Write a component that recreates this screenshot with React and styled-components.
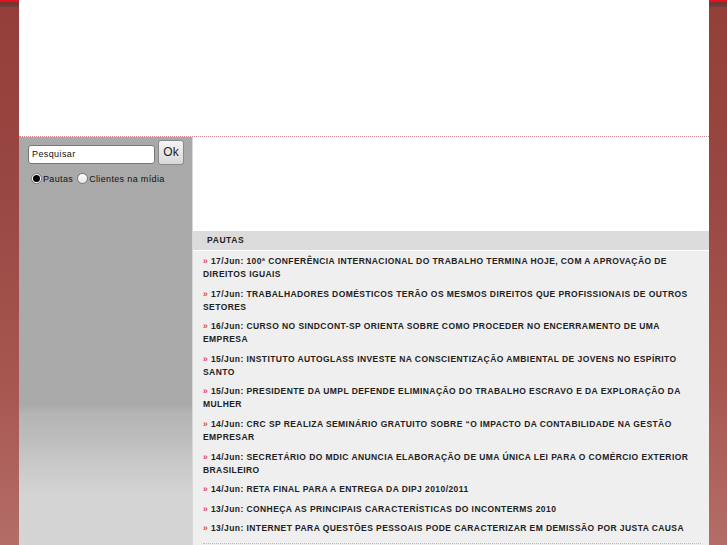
import React from "react";
import styled, { createGlobalStyle } from "styled-components";

const Global = createGlobalStyle`
  html, body { margin: 0; padding: 0; }
  body {
    height: 545px;
    overflow: hidden;
    font-family: "Liberation Sans", Arial, sans-serif;
    background:
      linear-gradient(#e8101a 0, #e8101a 2px, #6e3532 2px, #7a3b37 7px, transparent 7px),
      linear-gradient(#933e39 0, #9a4843 200px, #a7564f 380px, #b46d68 545px);
  }
`;

const Page = styled.div`
  width: 690px;
  margin-left: 19px;
  background: #fff;
  min-height: 545px;
`;

const Header = styled.div`
  height: 136px;
  border-bottom: 1px dotted #d48a88;
`;

const Body = styled.div`
  display: flex;
`;

const Sidebar = styled.div`
  width: 174px;
  min-height: 408px;
  border-right: 1px solid #d8d8d8;
  background: linear-gradient(#a9a9a9 0, #aaaaaa 268px, #b4b4b4 276px, #bdbdbd 302px, #c8c8c8 326px, #d4d4d4 358px, #d5d5d5 100%);
  padding: 3px 0 0 9px;
  box-sizing: border-box;
`;

const SearchRow = styled.div`
  display: flex;
  align-items: flex-end;
  gap: 3px;
`;

const SearchInput = styled.div`
  width: 127px;
  height: 19px;
  box-sizing: border-box;
  border: 1px solid #777;
  border-radius: 3px;
  background: #fff;
  font-size: 9px;
  letter-spacing: 0.4px;
  line-height: 17px;
  padding-left: 3px;
  color: #111;
  margin-bottom: 1px;
`;

const OkButton = styled.div`
  width: 26px;
  height: 25px;
  box-sizing: border-box;
  border: 1px solid #8a8a8a;
  border-radius: 3px;
  background: linear-gradient(#f4f4f4, #d8d8d8);
  font-size: 12px;
  line-height: 23px;
  text-align: center;
  color: #222;
`;

const RadioRow = styled.div`
  display: flex;
  align-items: center;
  margin-top: 8px;
  font-size: 9px;
  letter-spacing: 0.35px;
  color: #111;
`;

const Radio = styled.span`
  width: 11px;
  height: 11px;
  box-sizing: border-box;
  border-radius: 50%;
  border: 1px solid #777;
  background: ${(p) => (p.$on ? "#fff" : "linear-gradient(#fff, #e6e6e6)")};
  display: inline-flex;
  align-items: center;
  justify-content: center;
  margin: 0 1px 0 3px;
  &::after {
    content: "";
    display: ${(p) => (p.$on ? "block" : "none")};
    width: 7px;
    height: 7px;
    border-radius: 50%;
    background: #000;
  }
`;

const RadioLabel = styled.span`
  margin-right: 1px;
`;

const Main = styled.div`
  flex: 1;
  padding-top: 94px;
`;

const SectionTitle = styled.div`
  height: 19px;
  background: #dcdcdc;
  border-bottom: 1px solid #fff;
  font-size: 8.5px;
  font-weight: bold;
  letter-spacing: 0.6px;
  color: #222;
  line-height: 19px;
  padding-left: 14px;
`;

const List = styled.ul`
  list-style: none;
  margin: 0;
  padding: 4px 8px 0 10px;
  background: #efefef;
  min-height: 300px;
`;

const Item = styled.li`
  font-size: 8.5px;
  font-weight: bold;
  letter-spacing: 0.42px;
  line-height: 13px;
  color: #222;
  padding-bottom: 6.6px;
`;

const Bullet = styled.span`
  color: #e8453f;
`;

const Divider = styled.div`
  border-top: 1px dotted #bdbdbd;
  margin-top: 1px;
`;

const items = [
  "17/Jun: 100ª CONFERÊNCIA INTERNACIONAL DO TRABALHO TERMINA HOJE, COM A APROVAÇÃO DE DIREITOS IGUAIS",
  "17/Jun: TRABALHADORES DOMÉSTICOS TERÃO OS MESMOS DIREITOS QUE PROFISSIONAIS DE OUTROS SETORES",
  "16/Jun: CURSO NO SINDCONT-SP ORIENTA SOBRE COMO PROCEDER NO ENCERRAMENTO DE UMA EMPRESA",
  "15/Jun: INSTITUTO AUTOGLASS INVESTE NA CONSCIENTIZAÇÃO AMBIENTAL DE JOVENS NO ESPÍRITO SANTO",
  "15/Jun: PRESIDENTE DA UMPL DEFENDE ELIMINAÇÃO DO TRABALHO ESCRAVO E DA EXPLORAÇÃO DA MULHER",
  "14/Jun: CRC SP REALIZA SEMINÁRIO GRATUITO SOBRE “O IMPACTO DA CONTABILIDADE NA GESTÃO EMPRESAR",
  "14/Jun: SECRETÁRIO DO MDIC ANUNCIA ELABORAÇÃO DE UMA ÚNICA LEI PARA O COMÉRCIO EXTERIOR BRASILEIRO",
  "14/Jun: RETA FINAL PARA A ENTREGA DA DIPJ 2010/2011",
  "13/Jun: CONHEÇA AS PRINCIPAIS CARACTERÍSTICAS DO INCONTERMS 2010",
  "13/Jun: INTERNET PARA QUESTÕES PESSOAIS PODE CARACTERIZAR EM DEMISSÃO POR JUSTA CAUSA",
];

export default function App() {
  return (
    <>
      <Global />
      <Page>
        <Header />
        <Body>
          <Sidebar>
            <SearchRow>
              <SearchInput>Pesquisar</SearchInput>
              <OkButton>Ok</OkButton>
            </SearchRow>
            <RadioRow>
              <Radio $on />
              <RadioLabel>Pautas</RadioLabel>
              <Radio />
              <RadioLabel>Clientes na mídia</RadioLabel>
            </RadioRow>
          </Sidebar>
          <Main>
            <SectionTitle>PAUTAS</SectionTitle>
            <List>
              {items.map((t) => (
                <Item key={t}>
                  <Bullet>»</Bullet> {t}
                </Item>
              ))}
              <Divider />
            </List>
          </Main>
        </Body>
      </Page>
    </>
  );
}
